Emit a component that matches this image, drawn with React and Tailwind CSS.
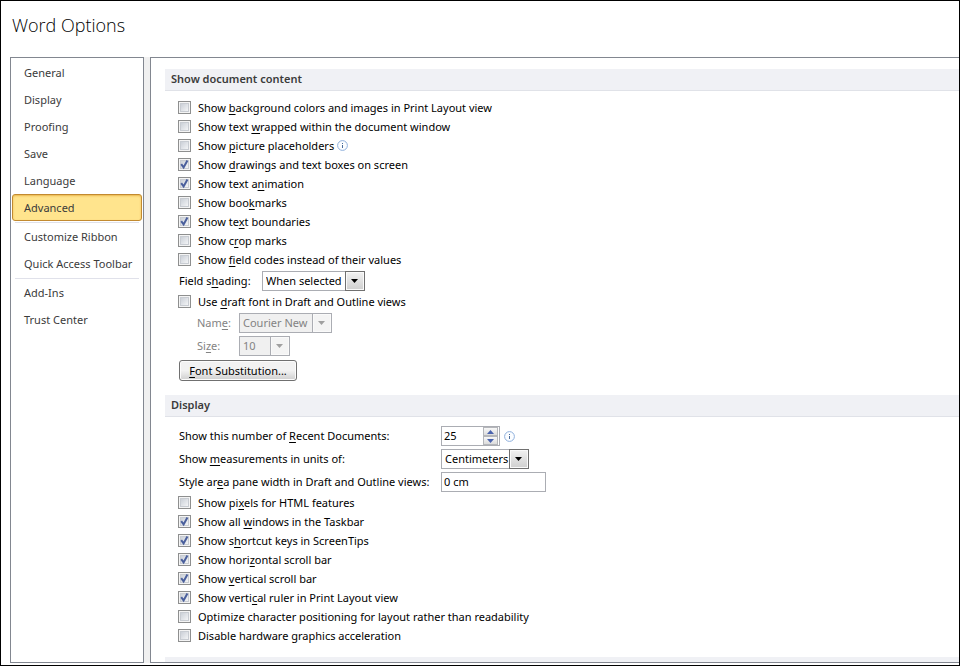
import { useState } from "react";
import clsx from "clsx";

const NAV_GROUPS = [
  ["General", "Display", "Proofing", "Save", "Language", "Advanced"],
  ["Customize Ribbon", "Quick Access Toolbar"],
  ["Add-Ins", "Trust Center"],
];

// "_" marks the access key: the letter after it is underlined
const CONTENT_OPTIONS = [
  { label: "Show _background colors and images in Print Layout view" },
  { label: "Show text _wrapped within the document window" },
  { label: "Show _picture placeholders", info: true },
  { label: "Show _drawings and text boxes on screen", checked: true },
  { label: "Show text a_nimation", checked: true },
  { label: "Show boo_kmarks" },
  { label: "Show te_xt boundaries", checked: true },
  { label: "Show c_rop marks" },
  { label: "Show _field codes instead of their values" },
];

const DISPLAY_OPTIONS = [
  { label: "Show pi_xels for HTML features" },
  { label: "Show all _windows in the Taskbar", checked: true },
  { label: "Show s_hortcut keys in ScreenTips", checked: true },
  { label: "Show hori_zontal scroll bar", checked: true },
  { label: "Show _vertical scroll bar", checked: true },
  { label: "Show verti_cal ruler in Print Layout view", checked: true },
  { label: "Optimize character positioning for layout rather than readability" },
  { label: "Disable hardware _graphics acceleration" },
];

function KeyLabel({ text }) {
  const at = text.indexOf("_");
  if (at < 0) return <span>{text}</span>;
  return (
    <span>
      {text.slice(0, at)}
      <u className="underline-offset-2">{text[at + 1]}</u>
      {text.slice(at + 2)}
    </span>
  );
}

function InfoIcon() {
  return (
    <svg width="11" height="11" viewBox="0 0 11 11" fill="none" aria-hidden="true">
      <circle cx="5.5" cy="5.5" r="4.9" fill="#fbfdff" stroke="#8fb0dc" />
      <rect x="5" y="3" width="1" height="1" fill="#4a6c9c" />
      <rect x="5" y="5" width="1" height="3" fill="#4a6c9c" />
    </svg>
  );
}

function CheckOption({ label, checked = false, info }) {
  const [on, setOn] = useState(checked);
  return (
    <div className="flex h-[19px] items-center">
      <label className="flex items-center gap-[7px]">
        <span className="grid size-[13px] shrink-0">
          <input
            type="checkbox"
            checked={on}
            onChange={(e) => setOn(e.target.checked)}
            className="col-start-1 row-start-1 size-[13px] appearance-none border border-[#8e8f8f] bg-linear-to-br from-[#c0c6cf] to-white shadow-[inset_0_0_0_1px_#f4f4f4,inset_0_0_0_2px_#c8ccd2]"
          />
          {on && (
            <svg viewBox="0 0 13 13" className="pointer-events-none col-start-1 row-start-1 size-[13px]" fill="none">
              <path d="M3.2 6.2 L5.6 9.4 L9.4 2.6" stroke="#4a5f9c" strokeWidth="2" />
            </svg>
          )}
        </span>
        <KeyLabel text={label} />
      </label>
      {info && (
        <span className="ml-[3px]">
          <InfoIcon />
        </span>
      )}
    </div>
  );
}

function DropDown({ id, value, width, disabled }) {
  return (
    <div className={clsx("grid h-5", width)}>
      <select
        id={id}
        disabled={disabled}
        className={clsx(
          "col-start-1 row-start-1 h-5 w-full appearance-none border border-[#abadb3] pl-[3px] leading-[18px] opacity-100",
          disabled ? "bg-[#f0f0f0] text-[#838383]" : "bg-white text-black"
        )}
      >
        <option>{value}</option>
      </select>
      <span
        className={clsx(
          "pointer-events-none col-start-1 row-start-1 flex h-5 w-5 items-center justify-center justify-self-end border pr-px shadow-[inset_0_0_0_1px_#fafafa]",
          disabled ? "border-[#abadb3] bg-[#f4f4f4]" : "border-[#707070] bg-linear-to-b from-[#f2f2f2] to-[#cfcfcf]"
        )}
      >
        <svg width="7" height="4" viewBox="0 0 7 4" aria-hidden="true">
          <path d="M0 0h7L3.5 4z" fill={disabled ? "#a0a0a0" : "#000"} />
        </svg>
      </span>
    </div>
  );
}

function Spinner({ id, value }) {
  const [count, setCount] = useState(value);
  const button = "flex h-[9px] w-[15px] items-center justify-center border border-[#b4b6ba] bg-linear-to-b from-[#f8f8f8] to-[#dcdcdc]";
  return (
    <div className="flex h-5 w-[59px] border border-[#abadb3] bg-white pr-px">
      <input
        id={id}
        value={count}
        onChange={(e) => setCount(Number(e.target.value) || 0)}
        className="w-0 flex-1 pl-[2px] outline-none"
      />
      <span className="flex flex-col">
        <button type="button" aria-label="Increase" className={button} onClick={() => setCount(count + 1)}>
          <svg width="7" height="4" viewBox="0 0 7 4"><path d="M0 4h7L3.5 0z" fill="#4a63ae" /></svg>
        </button>
        <button type="button" aria-label="Decrease" className={button} onClick={() => setCount(count - 1)}>
          <svg width="7" height="4" viewBox="0 0 7 4"><path d="M0 0h7L3.5 4z" fill="#4a63ae" /></svg>
        </button>
      </span>
    </div>
  );
}

function SectionHeader({ children }) {
  return (
    <h2 className="h-[22px] border-b border-[#e0e2e8] bg-[#f0f1f5] pl-[6px] leading-5 font-semibold text-[#3b3b3b]">
      {children}
    </h2>
  );
}

function Sidebar() {
  const [active, setActive] = useState("Advanced");
  return (
    <nav className="w-[134px] shrink-0 border border-[#828790] bg-white px-px pt-px text-[#3b3b3b]">
      {NAV_GROUPS.map((group, i) => (
        <div key={group[0]}>
          {i > 0 && <hr className="mx-[3px] mt-px border-[#e0e1ea]" />}
          {group.map((item) => (
            <button
              key={item}
              type="button"
              onClick={() => setActive(item)}
              className={clsx(
                "block h-[27px] w-full rounded-[3px] border pl-[11px] text-left",
                item === active
                  ? "border-[#c28a30] bg-[#ffe48d] shadow-[inset_0_1px_2px_#eab64e]"
                  : "border-transparent"
              )}
            >
              {item}
            </button>
          ))}
        </div>
      ))}
    </nav>
  );
}

export default function App() {
  const [styleWidth, setStyleWidth] = useState("0 cm");
  return (
    <div className="flex h-screen flex-col overflow-hidden border border-black bg-white pb-[2px] pl-[9px] font-['Noto_Sans',sans-serif] text-[11px] leading-4 text-black">
      <h1 className="h-14 shrink-0 pt-2 pl-[2px] font-['Open_Sans',sans-serif] text-[18px] leading-8 font-light">Word Options</h1>

      <div className="flex min-h-0 flex-1">
        <Sidebar />
        <div className="w-[6px] shrink-0 bg-[#f0f0f0]" />

        <main className="min-w-0 flex-1 overflow-hidden border-y border-l border-[#828790] pt-[11px] pl-[14px]">
          <section>
            <SectionHeader>Show document content</SectionHeader>
            <div className="pt-[7px] pb-[14px] pl-[13px]">
              {CONTENT_OPTIONS.map((option) => (
                <CheckOption key={option.label} {...option} />
              ))}
              <div className="flex h-[23px] items-center pt-px pl-px">
                <label htmlFor="shading" className="w-[83px]"><KeyLabel text="Field s_hading:" /></label>
                <DropDown id="shading" value="When selected" width="w-[103px]" />
              </div>
              <CheckOption label="Use _draft font in Draft and Outline views" />
              <div className="flex h-[23px] items-center pt-px pl-[19px] text-[#838383]">
                <label htmlFor="font-name" className="w-[42px]"><KeyLabel text="Nam_e:" /></label>
                <DropDown id="font-name" value="Courier New" width="w-[93px]" disabled />
              </div>
              <div className="flex h-[23px] items-center pt-px pl-[19px] text-[#838383]">
                <label htmlFor="font-size" className="w-[42px]"><KeyLabel text="Si_ze:" /></label>
                <DropDown id="font-size" value="10" width="w-[51px]" disabled />
              </div>
              <button
                type="button"
                className="mt-[3px] ml-px block h-[21px] w-[118px] rounded-[3px] border border-[#707070] bg-linear-to-b from-[#f2f2f2] from-50% to-[#cfcfcf] shadow-[inset_0_0_0_1px_#fcfcfc]"
              >
                <KeyLabel text="_Font Substitution..." />
              </button>
            </div>
          </section>

          <section>
            <SectionHeader>Display</SectionHeader>
            <div className="pt-[7px] pb-3 pl-[13px]">
              <div className="pl-px">
                <div className="flex h-[23px] items-center pt-px">
                  <label htmlFor="recent" className="w-[262px]"><KeyLabel text="Show this number of _Recent Documents:" /></label>
                  <Spinner id="recent" value={25} />
                  <span className="ml-1"><InfoIcon /></span>
                </div>
                <div className="flex h-[23px] items-center pt-px">
                  <label htmlFor="units" className="w-[262px]"><KeyLabel text="Show _measurements in units of:" /></label>
                  <DropDown id="units" value="Centimeters" width="w-[88px]" />
                </div>
                <div className="flex h-[23px] items-center pt-px">
                  <label htmlFor="style-width" className="w-[262px]"><KeyLabel text="Style ar_ea pane width in Draft and Outline views:" /></label>
                  <input
                    id="style-width"
                    value={styleWidth}
                    onChange={(e) => setStyleWidth(e.target.value)}
                    className="h-5 w-[105px] border border-[#abadb3] bg-white pb-px pl-[2px]"
                  />
                </div>
              </div>
              {DISPLAY_OPTIONS.map((option) => (
                <CheckOption key={option.label} {...option} />
              ))}
            </div>
          </section>

          <div className="h-[22px] border-b border-[#e0e2e8] bg-[#f0f1f5]" />
        </main>
      </div>
    </div>
  );
}
